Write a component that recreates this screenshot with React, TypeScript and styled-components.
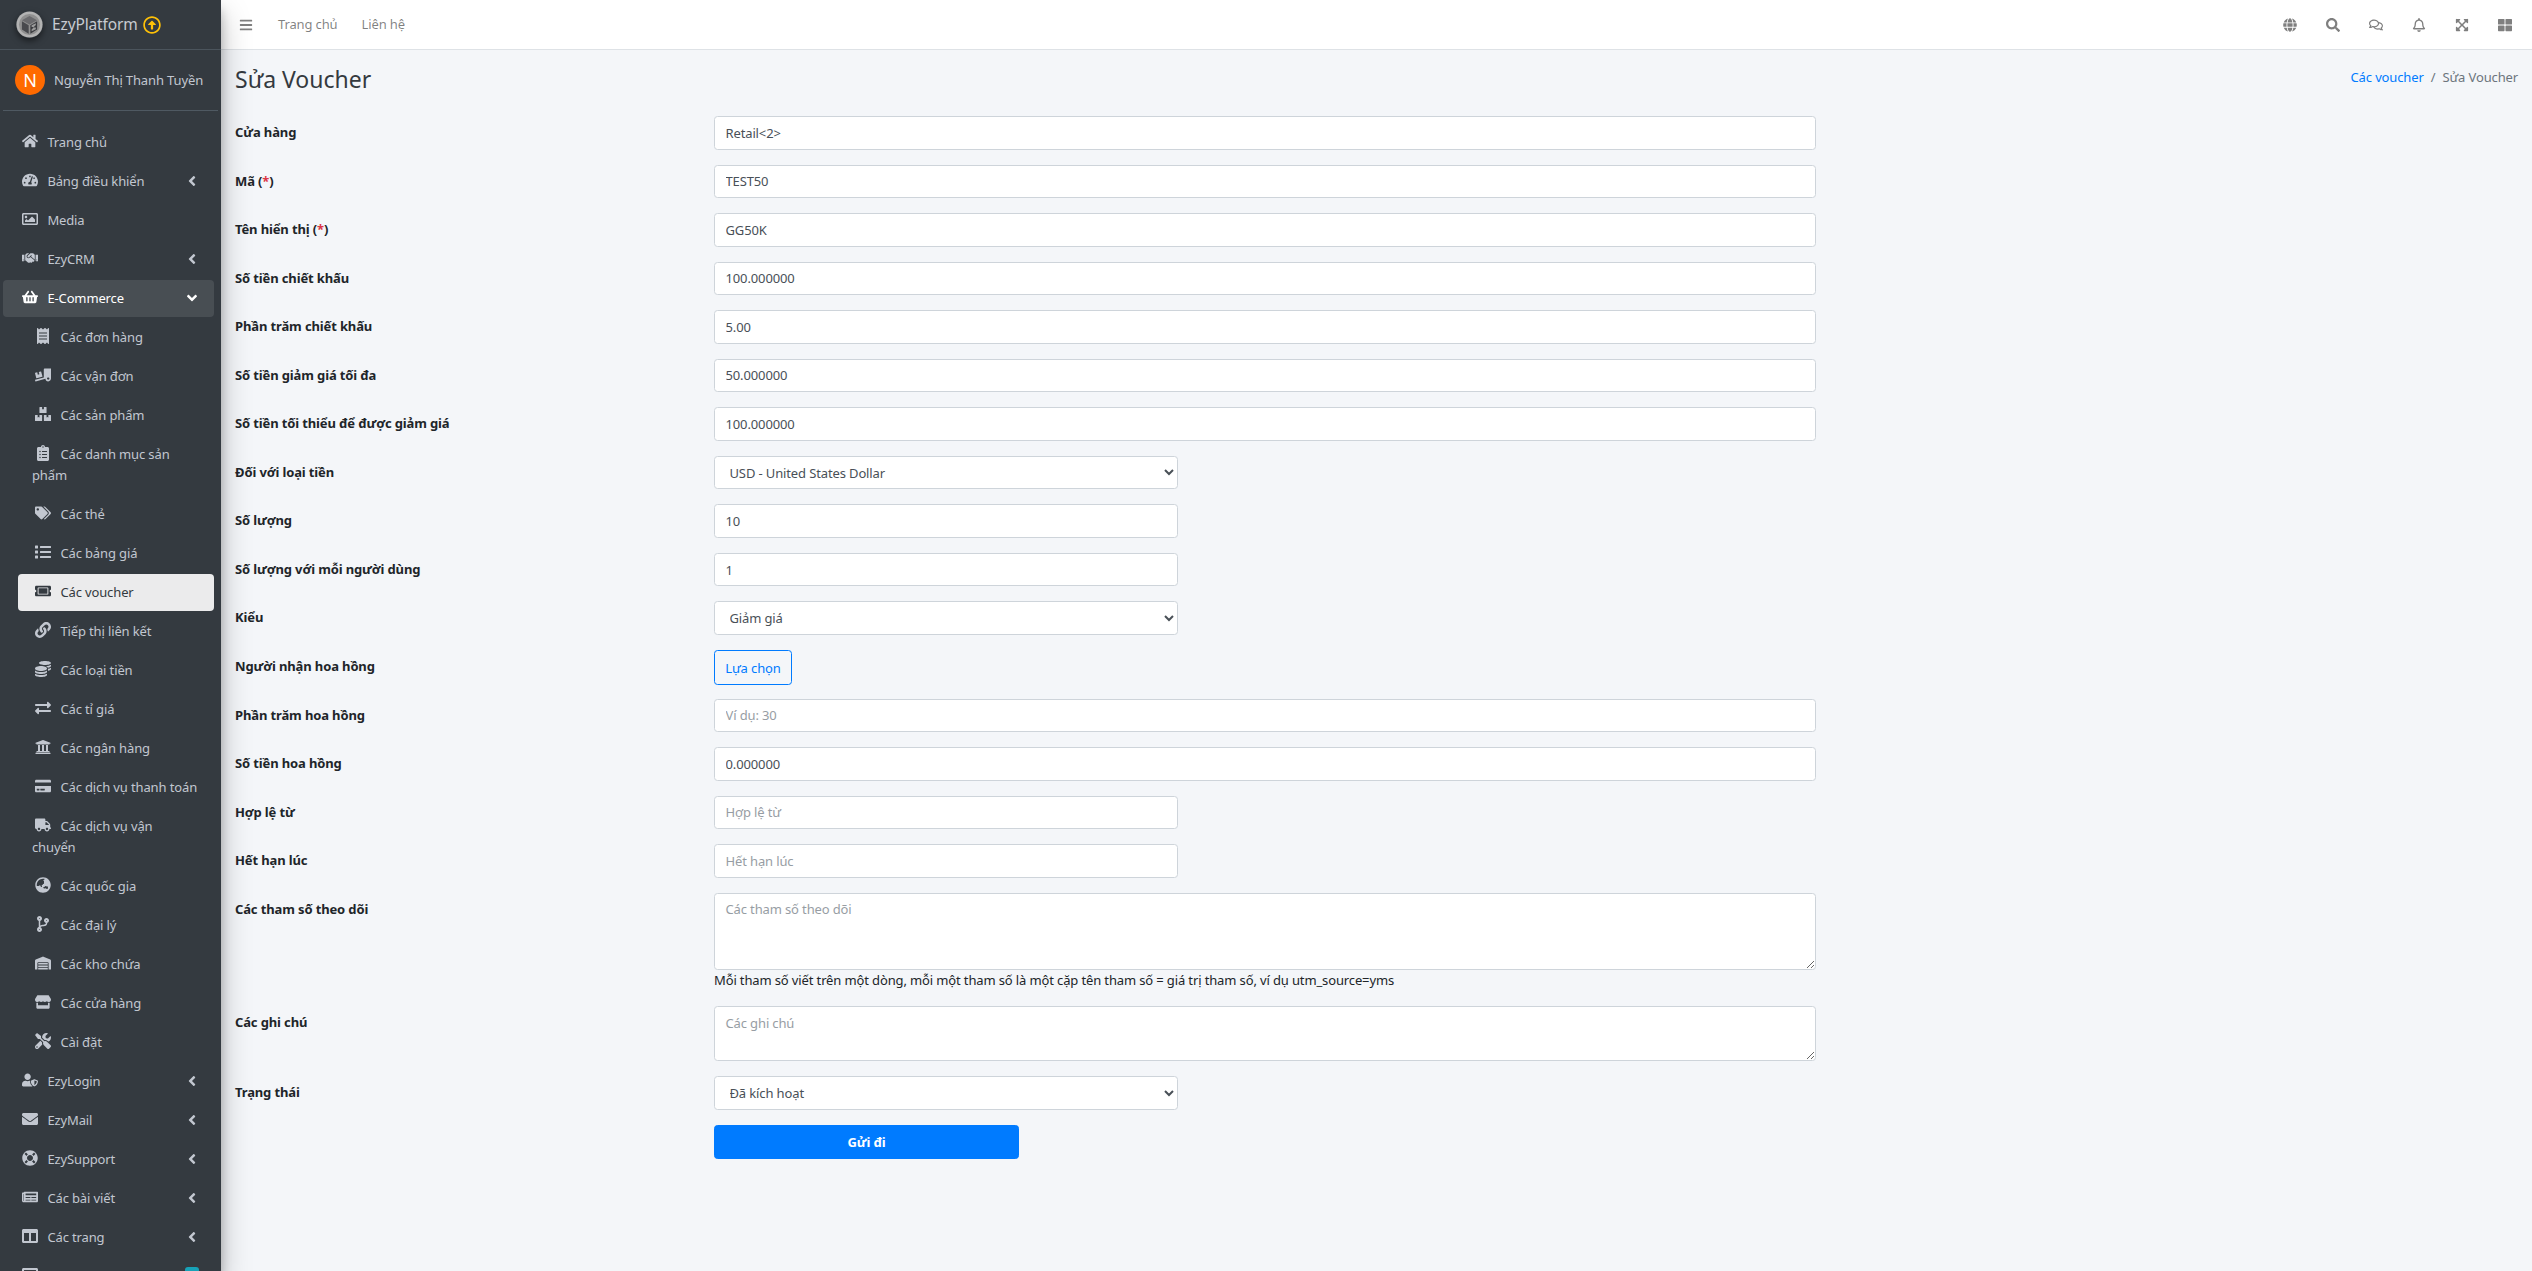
import React from 'react';
import styled, { createGlobalStyle } from 'styled-components';
import { IconType } from 'react-icons';
import {
  FaHome, FaTachometerAlt, FaRegImage, FaHandshake, FaShoppingBasket, FaReceipt, FaTruckLoading, FaBoxes,
  FaClipboardList, FaTags, FaList, FaTicketAlt, FaLink, FaCoins, FaExchangeAlt, FaUniversity,
  FaCreditCard, FaTruck, FaGlobeAsia, FaCodeBranch, FaWarehouse, FaStore, FaTools, FaUserShield,
  FaEnvelope, FaLifeRing, FaNewspaper, FaColumns, FaAngleLeft, FaAngleDown, FaBars, FaGlobe, FaSearch,
  FaRegComments, FaRegBell, FaExpandArrowsAlt, FaThLarge, FaRegArrowAltCircleUp, FaWindowMaximize,
} from 'react-icons/fa';

const GlobalStyle = createGlobalStyle`
  html, body { margin: 0; height: 100%; }
  body {
    font-family: "Noto Sans", "Liberation Sans", sans-serif;
    font-size: 13px;
    line-height: 21px;
    letter-spacing: -0.13px;
    background: #f4f6f9;
    color: #212529;
    overflow: hidden;
  }
  * { box-sizing: border-box; }
`;

type NavEntry = { icon: IconType; label: string; caret?: boolean; open?: boolean; sub?: boolean; active?: boolean; badge?: boolean };

const navItems: NavEntry[] = [
  { icon: FaHome, label: 'Trang chủ' },
  { icon: FaTachometerAlt, label: 'Bảng điều khiển', caret: true },
  { icon: FaRegImage, label: 'Media' },
  { icon: FaHandshake, label: 'EzyCRM', caret: true },
  { icon: FaShoppingBasket, label: 'E-Commerce', open: true },
  { icon: FaReceipt, label: 'Các đơn hàng', sub: true },
  { icon: FaTruckLoading, label: 'Các vận đơn', sub: true },
  { icon: FaBoxes, label: 'Các sản phẩm', sub: true },
  { icon: FaClipboardList, label: 'Các danh mục sản phẩm', sub: true },
  { icon: FaTags, label: 'Các thẻ', sub: true },
  { icon: FaList, label: 'Các bảng giá', sub: true },
  { icon: FaTicketAlt, label: 'Các voucher', sub: true, active: true },
  { icon: FaLink, label: 'Tiếp thị liên kết', sub: true },
  { icon: FaCoins, label: 'Các loại tiền', sub: true },
  { icon: FaExchangeAlt, label: 'Các tỉ giá', sub: true },
  { icon: FaUniversity, label: 'Các ngân hàng', sub: true },
  { icon: FaCreditCard, label: 'Các dịch vụ thanh toán', sub: true },
  { icon: FaTruck, label: 'Các dịch vụ vận chuyển', sub: true },
  { icon: FaGlobeAsia, label: 'Các quốc gia', sub: true },
  { icon: FaCodeBranch, label: 'Các đại lý', sub: true },
  { icon: FaWarehouse, label: 'Các kho chứa', sub: true },
  { icon: FaStore, label: 'Các cửa hàng', sub: true },
  { icon: FaTools, label: 'Cài đặt', sub: true },
  { icon: FaUserShield, label: 'EzyLogin', caret: true },
  { icon: FaEnvelope, label: 'EzyMail', caret: true },
  { icon: FaLifeRing, label: 'EzySupport', caret: true },
  { icon: FaNewspaper, label: 'Các bài viết', caret: true },
  { icon: FaColumns, label: 'Các trang', caret: true },
  { icon: FaWindowMaximize, label: 'Các', badge: true },
];

const topIcons = [FaGlobe, FaSearch, FaRegComments, FaRegBell, FaExpandArrowsAlt, FaThLarge];

function Req() {
  return <>(<Star>*</Star>)</>;
}

function Logo() {
  return (
    <svg viewBox="0 0 32 32">
      <circle cx="16" cy="16" r="15.5" fill="#b3b3b3" />
      <circle cx="16" cy="16" r="12.5" fill="#8f8f8f" />
      <path d="M7 11l9-5 9 5-9 5z" fill="#6a6a6d" />
      <path d="M7 12l8 5v10l-8-5z" fill="#48494d" />
      <path d="M25 12l-8 5v10l8-5z" fill="#3a3b3f" />
      <path d="M18.5 17l5-2.5v2l-3 3h3v2l-5 2.5v-2l3-3h-3z" fill="#9a9a9a" />
    </svg>
  );
}

export default function App() {
  return (
    <Layout>
      <GlobalStyle />
      <Sidebar>
        <Brand>
          <BrandLogo><Logo /></BrandLogo>
          <BrandName>EzyPlatform</BrandName>
          <FaRegArrowAltCircleUp size={18} color="#ffc107" />
        </Brand>
        <UserPanel>
          <Avatar>N</Avatar>
          <UserName>Nguyễn Thị Thanh Tuyền</UserName>
        </UserPanel>
        <NavList>
          {navItems.map((item) => {
            const Icon = item.icon;
            return (
              <NavLink key={item.label} $sub={item.sub} $active={item.active} $open={item.open}>
                <NavIcon><Icon /></NavIcon>
                {item.label}
                {item.caret && <Caret><FaAngleLeft /></Caret>}
                {item.open && <Caret><FaAngleDown /></Caret>}
                {item.badge && <Badge />}
              </NavLink>
            );
          })}
        </NavList>
      </Sidebar>
      <Main>
        <TopBar>
          <TopLeft>
            <BarsButton><FaBars /></BarsButton>
            <TopLink>Trang chủ</TopLink>
            <TopLink>Liên hệ</TopLink>
          </TopLeft>
          <TopRight>
            {topIcons.map((Icon, i) => <TopIcon key={i}><Icon /></TopIcon>)}
          </TopRight>
        </TopBar>
        <Content>
          <Header>
            <Title>Sửa Voucher</Title>
            <Crumbs>
              <CrumbLink>Các voucher</CrumbLink>
              <CrumbSep>/</CrumbSep>
              <span>Sửa Voucher</span>
            </Crumbs>
          </Header>
          <Form>
            <Row><Label>Cửa hàng</Label><Input defaultValue="Retail<2>" /></Row>
            <Row><Label>Mã <Req /></Label><Input defaultValue="TEST50" /></Row>
            <Row><Label>Tên hiển thị <Req /></Label><Input defaultValue="GG50K" /></Row>
            <Row><Label>Số tiền chiết khấu</Label><Input defaultValue="100.000000" /></Row>
            <Row><Label>Phần trăm chiết khấu</Label><Input defaultValue="5.00" /></Row>
            <Row><Label>Số tiền giảm giá tối đa</Label><Input defaultValue="50.000000" /></Row>
            <Row><Label>Số tiền tối thiểu để được giảm giá</Label><Input defaultValue="100.000000" /></Row>
            <Row>
              <Label>Đối với loại tiền</Label>
              <Select defaultValue="USD"><option value="USD">USD - United States Dollar</option></Select>
            </Row>
            <Row><Label>Số lượng</Label><Input $short defaultValue="10" /></Row>
            <Row><Label>Số lượng với mỗi người dùng</Label><Input $short defaultValue="1" /></Row>
            <Row>
              <Label>Kiểu</Label>
              <Select defaultValue="d"><option value="d">Giảm giá</option></Select>
            </Row>
            <Row><Label>Người nhận hoa hồng</Label><OutlineButton type="button">Lựa chọn</OutlineButton></Row>
            <Row><Label>Phần trăm hoa hồng</Label><Input placeholder="Ví dụ: 30" /></Row>
            <Row><Label>Số tiền hoa hồng</Label><Input defaultValue="0.000000" /></Row>
            <Row><Label>Hợp lệ từ</Label><Input $short placeholder="Hợp lệ từ" /></Row>
            <Row><Label>Hết hạn lúc</Label><Input $short placeholder="Hết hạn lúc" /></Row>
            <Row>
              <Label>Các tham số theo dõi</Label>
              <div>
                <TrackArea placeholder="Các tham số theo dõi" />
                <Help>Mỗi tham số viết trên một dòng, mỗi một tham số là một cặp tên tham số = giá trị tham số, ví dụ utm_source=yms</Help>
              </div>
            </Row>
            <Row><Label>Các ghi chú</Label><NoteArea placeholder="Các ghi chú" /></Row>
            <Row>
              <Label>Trạng thái</Label>
              <Select defaultValue="a"><option value="a">Đã kích hoạt</option></Select>
            </Row>
            <Row><span /><SubmitButton type="button">Gửi đi</SubmitButton></Row>
          </Form>
        </Content>
      </Main>
    </Layout>
  );
}

const Layout = styled.div`
  display: flex;
  height: 1271px;
  overflow: hidden;
`;

const Sidebar = styled.aside`
  flex: 0 0 221px;
  background: #343a40;
  box-shadow: 0 14px 28px rgba(0, 0, 0, .25), 0 10px 10px rgba(0, 0, 0, .22);
  overflow: hidden;
  position: relative;
  z-index: 2;
`;

const Brand = styled.div`
  height: 50px;
  display: flex;
  align-items: center;
  padding-left: 16px;
  border-bottom: 1px solid #4b545c;
  color: rgba(255, 255, 255, .8);
`;

const BrandLogo = styled.div`
  width: 27px;
  height: 27px;
  margin-right: 9px;
  border-radius: 50%;
  box-shadow: 0 3px 6px rgba(0, 0, 0, .5);
  svg { display: block; width: 27px; height: 27px; }
`;

const BrandName = styled.span`
  font-size: 15.5px;
  margin-right: 5px;
  color: #c7cbd1;
`;

const UserPanel = styled.div`
  height: 61px;
  margin: 0 3px;
  display: flex;
  align-items: center;
  padding-left: 12px;
  border-bottom: 1px solid #4f5962;
`;

const Avatar = styled.div`
  width: 30px;
  height: 30px;
  border-radius: 50%;
  background: #ff6a00;
  color: #fff;
  font-size: 18px;
  display: flex;
  align-items: center;
  justify-content: center;
  margin-right: 9px;
`;

const UserName = styled.span`
  color: #c2c7d0;
  white-space: nowrap;
`;

const NavList = styled.nav`
  padding: 13px 7px 0 3px;
`;

const NavLink = styled.a<{ $sub?: boolean; $active?: boolean; $open?: boolean }>`
  display: block;
  position: relative;
  margin: 0 0 2px ${(p) => (p.$sub ? 15 : 0)}px;
  padding: 8px 16px 8px ${(p) => (p.$sub ? 14 : 16)}px;
  border-radius: 4px;
  line-height: 21px;
  color: ${(p) => (p.$active ? '#343a40' : p.$open ? '#fff' : '#c2c7d0')};
  background: ${(p) => (p.$active ? 'rgba(255,255,255,.9)' : p.$open ? 'rgba(255,255,255,.1)' : 'transparent')};
`;

const NavIcon = styled.span`
  display: inline-flex;
  justify-content: center;
  align-items: center;
  width: 22.4px;
  height: 16px;
  margin-right: 6px;
  font-size: 16px;
  vertical-align: -2px;
  svg { width: auto; height: 1em; }
`;

const Caret = styled.span`
  position: absolute;
  right: 14px;
  top: 18px;
  transform: translateY(-50%);
  display: flex;
  font-size: 16px;
  svg { width: auto; height: 1em; }
`;

const Badge = styled.span`
  position: absolute;
  right: 15px;
  top: 9px;
  width: 14px;
  height: 20px;
  border-radius: 3px;
  background: #17a2b8;
`;

const Main = styled.main`
  flex: 1;
  min-width: 0;
  display: flex;
  flex-direction: column;
`;

const TopBar = styled.header`
  height: 50px;
  flex: none;
  background: #fff;
  border-bottom: 1px solid #dee2e6;
  display: flex;
  align-items: center;
  justify-content: space-between;
`;

const TopLeft = styled.div`
  display: flex;
  align-items: center;
  padding-left: 18px;
`;

const BarsButton = styled.span`
  display: flex;
  font-size: 14px;
  color: rgba(0, 0, 0, .5);
  margin-right: 25px;
  svg { width: auto; height: 1em; }
`;

const TopLink = styled.a`
  color: rgba(0, 0, 0, .5);
  margin-right: 24px;
`;

const TopRight = styled.div`
  display: flex;
  padding-right: 6px;
`;

const TopIcon = styled.span`
  display: flex;
  justify-content: center;
  width: 43px;
  font-size: 14px;
  color: rgba(0, 0, 0, .5);
  svg { width: auto; height: 1em; }
`;

const Content = styled.div`
  flex: 1;
  padding: 0 14px 0 14px;
`;

const Header = styled.div`
  height: 66px;
  padding-bottom: 8px;
  display: flex;
  align-items: center;
  justify-content: space-between;
`;

const Title = styled.h1`
  margin: 0;
  font-size: 23px;
  font-weight: 400;
  line-height: 30px;
  letter-spacing: 0;
  color: #343a40;
`;

const Crumbs = styled.div`
  color: #6c757d;
  margin-bottom: 4px;
`;

const CrumbLink = styled.a`
  color: #007bff;
`;

const CrumbSep = styled.span`
  padding: 0 7px;
`;

const Form = styled.form``;

const Row = styled.div`
  display: grid;
  grid-template-columns: 479px 1102px;
  margin-bottom: 15.06px;
`;

const Label = styled.label`
  font-weight: 700;
  color: #212529;
  padding-top: 6px;
`;

const Star = styled.span`
  color: #dc3545;
`;

const fieldBase = `
  display: block;
  border: 1px solid #ced4da;
  border-radius: 3.5px;
  background: #fff;
  color: #495057;
  font-family: inherit;
  font-size: 13px;
  line-height: 21px;
  letter-spacing: inherit;
  padding: 5.25px 10.5px;
  outline: none;
  &::placeholder { color: #6c757d; opacity: .7; }
`;

const Input = styled.input<{ $short?: boolean }>`
  ${fieldBase}
  height: 33.5px;
  width: ${(p) => (p.$short ? '464px' : '100%')};
`;

const Select = styled.select`
  ${fieldBase}
  height: 33.5px;
  width: 464px;
`;

const TrackArea = styled.textarea`
  ${fieldBase}
  width: 100%;
  height: 77.5px;
`;

const NoteArea = styled.textarea`
  ${fieldBase}
  width: 100%;
  height: 55px;
`;

const Help = styled.div`
  color: #212529;
`;

const OutlineButton = styled.button`
  width: 78px;
  height: 35px;
  border: 1px solid #007bff;
  border-radius: 3.5px;
  background: transparent;
  color: #007bff;
  font-family: inherit;
  font-size: 13px;
  letter-spacing: inherit;
  margin-bottom: -1.5px;
`;

const SubmitButton = styled.button`
  width: 305px;
  height: 34px;
  border: 1px solid #007bff;
  border-radius: 3.5px;
  background: #007bff;
  color: #fff;
  font-family: inherit;
  font-weight: 700;
  font-size: 13px;
  letter-spacing: inherit;
`;
